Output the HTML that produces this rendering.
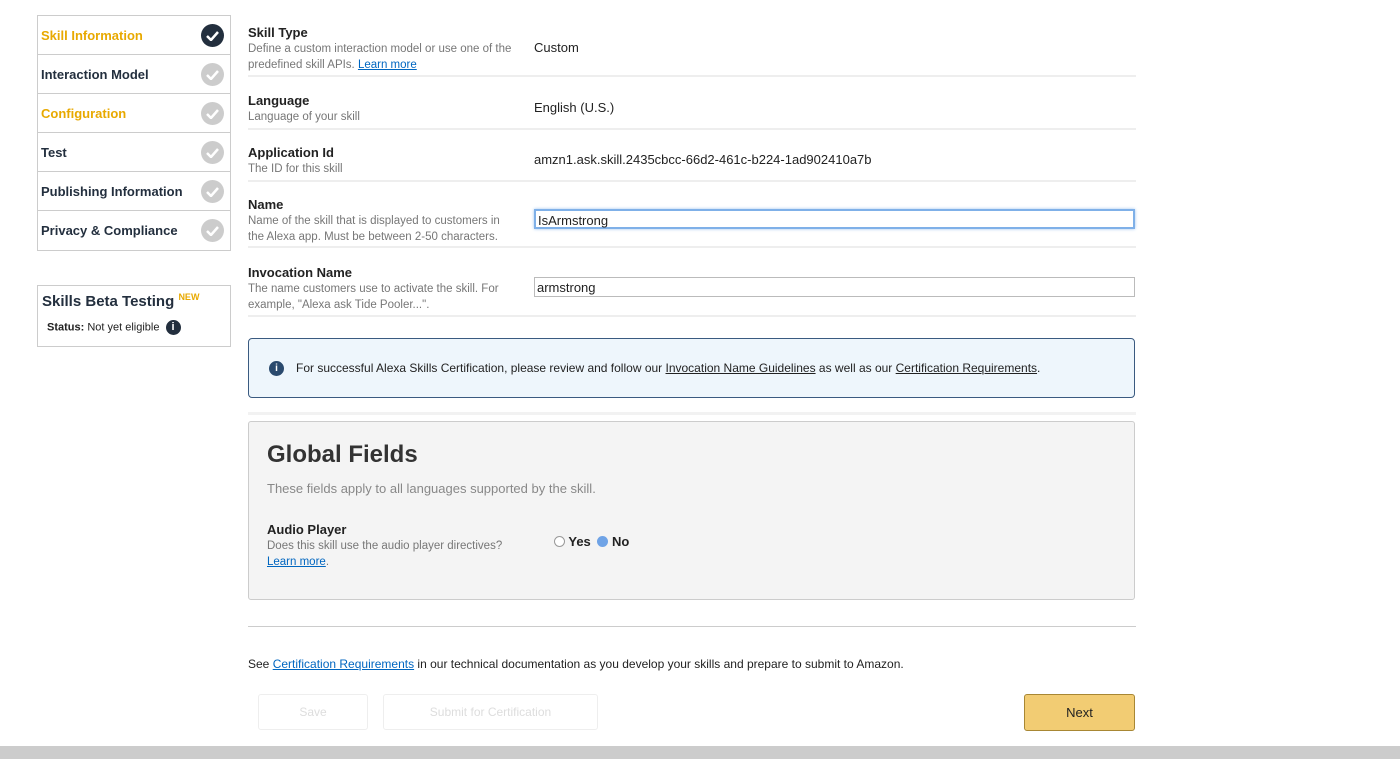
<!DOCTYPE html>
<html><head><style>
*{margin:0;padding:0;box-sizing:border-box}
body{width:1400px;height:759px;background:#fff;font-family:"Liberation Sans",Arial,sans-serif;position:relative;overflow:hidden;color:#222}
.a{position:absolute}
.nav{left:37px;top:15px;width:194px;border:1px solid #ccc}
.nav div{height:39px;border-bottom:1px solid #ccc;position:relative;font-weight:bold;font-size:13px;padding:12px 0 0 3px;color:#232f3e}
.nav div:last-child{border-bottom:none}
.nav .y{color:#e8a900}
.ck{position:absolute;right:6px;top:8px;width:23px;height:23px;border-radius:50%;background:#ccc}
.ck.d{background:#232f3e}
.ck svg{position:absolute;left:5px;top:6px}
.lbl{left:248px;font-size:13px;font-weight:bold;color:#222}
.sub{font-weight:normal;font-size:11.5px;color:#777;line-height:16px;margin-top:1px}
.val{left:534px;font-size:13px;color:#222}
.sep{left:248px;width:888px;height:2px;background:#eee}
.inp{left:534px;width:601px;height:20px;border:1px solid #bbb;font-size:13px;padding:2px 2px}
a,u{color:#0066c0;text-decoration:underline}
</style></head><body>
<div class="a nav">
<div class="y">Skill Information<span class="ck d"><svg width="13" height="11"><path d="M1 6l4 4 7-8" stroke="#fff" stroke-width="2.5" fill="none"/></svg></span></div>
<div>Interaction Model<span class="ck"><svg width="13" height="11"><path d="M1 6l4 4 7-8" stroke="#fff" stroke-width="2.5" fill="none"/></svg></span></div>
<div class="y">Configuration<span class="ck"><svg width="13" height="11"><path d="M1 6l4 4 7-8" stroke="#fff" stroke-width="2.5" fill="none"/></svg></span></div>
<div>Test<span class="ck"><svg width="13" height="11"><path d="M1 6l4 4 7-8" stroke="#fff" stroke-width="2.5" fill="none"/></svg></span></div>
<div>Publishing Information<span class="ck"><svg width="13" height="11"><path d="M1 6l4 4 7-8" stroke="#fff" stroke-width="2.5" fill="none"/></svg></span></div>
<div>Privacy &amp; Compliance<span class="ck"><svg width="13" height="11"><path d="M1 6l4 4 7-8" stroke="#fff" stroke-width="2.5" fill="none"/></svg></span></div>
</div>
<div class="a" style="left:37px;top:285px;width:194px;height:62px;border:1px solid #ccc">
<div style="position:absolute;left:4px;top:6px;font-size:15px;font-weight:bold;color:#232f3e">Skills Beta Testing <sup style="font-size:9px;color:#e8a900">NEW</sup></div>
<div style="position:absolute;left:9px;top:34px;font-size:11px"><b>Status:</b> Not yet eligible <span style="display:inline-block;width:15px;height:15px;border-radius:50%;background:#232f3e;color:#fff;font-size:11px;text-align:center;font-weight:bold;line-height:15px;vertical-align:middle;margin-left:3px">i</span></div>
</div>

<div class="a lbl" style="top:25px">Skill Type<div class="sub">Define a custom interaction model or use one of the<br>predefined skill APIs. <a>Learn more</a></div></div>
<div class="a val" style="top:40px">Custom</div>
<div class="a sep" style="top:75px"></div>
<div class="a lbl" style="top:93px">Language<div class="sub">Language of your skill</div></div>
<div class="a val" style="top:100px">English (U.S.)</div>
<div class="a sep" style="top:128px"></div>
<div class="a lbl" style="top:145px">Application Id<div class="sub">The ID for this skill</div></div>
<div class="a val" style="top:152px">amzn1.ask.skill.2435cbcc-66d2-461c-b224-1ad902410a7b</div>
<div class="a sep" style="top:180px"></div>
<div class="a lbl" style="top:197px">Name<div class="sub">Name of the skill that is displayed to customers in<br>the Alexa app. Must be between 2-50 characters.</div></div>
<div class="a inp" style="top:209px;border:2px solid #7fb0e8;box-shadow:0 0 3px #9cc3f0">IsArmstrong</div>
<div class="a sep" style="top:246px"></div>
<div class="a lbl" style="top:265px">Invocation Name<div class="sub">The name customers use to activate the skill. For<br>example, "Alexa ask Tide Pooler...".</div></div>
<div class="a inp" style="top:277px">armstrong</div>
<div class="a sep" style="top:315px"></div>

<div class="a" style="left:248px;top:338px;width:887px;height:60px;border:1px solid #3a5a80;border-radius:4px;background:#eef6fc;font-size:12px;padding:22px 0 0 47px">
<span style="position:absolute;left:20px;top:22px;width:15px;height:15px;border-radius:50%;background:#2a4a6e;color:#fff;font-size:10px;text-align:center;line-height:15px;font-weight:bold">i</span>
For successful Alexa Skills Certification, please review and follow our <u style="color:#222">Invocation Name Guidelines</u> as well as our <u style="color:#222">Certification Requirements</u>.</div>
<div class="a sep" style="top:412px;height:3px;background:#f2f2f2"></div>

<div class="a" style="left:248px;top:421px;width:887px;height:179px;border:1px solid #ccc;border-radius:3px;background:#f4f4f4">
<div style="position:absolute;left:18px;top:19px;font-size:24px;font-weight:bold;color:#333">Global Fields</div>
<div style="position:absolute;left:18px;top:59px;font-size:13px;color:#888">These fields apply to all languages supported by the skill.</div>
<div style="position:absolute;left:18px;top:100px;font-size:13px;font-weight:bold">Audio Player<div class="sub" style="font-size:11.5px">Does this skill use the audio player directives?<br><a>Learn more</a>.</div></div>
<div style="position:absolute;left:305px;top:112px;font-size:13px;font-weight:bold"><span style="display:inline-block;width:11px;height:11px;border:1px solid #999;border-radius:50%;background:#fff;vertical-align:-1px"></span> Yes <span style="display:inline-block;width:11px;height:11px;border-radius:50%;background:#6fa3e6;vertical-align:-1px;margin-left:3px"></span> No</div>
</div>

<div class="a sep" style="top:626px;height:1px;background:#ccc"></div>
<div class="a" style="left:248px;top:657px;font-size:12px">See <a>Certification Requirements</a> in our technical documentation as you develop your skills and prepare to submit to Amazon.</div>
<div class="a" style="left:258px;top:694px;width:110px;height:36px;border:1px solid #eee;border-radius:3px;color:#ddd;font-size:12px;text-align:center;line-height:34px">Save</div>
<div class="a" style="left:383px;top:694px;width:215px;height:36px;border:1px solid #eee;border-radius:3px;color:#ddd;font-size:12px;text-align:center;line-height:34px">Submit for Certification</div>
<div class="a" style="left:1024px;top:694px;width:111px;height:37px;border:1px solid #a88734;border-radius:3px;background:#f2cc73;color:#222;font-size:13px;text-align:center;line-height:35px">Next</div>
<div class="a" style="left:0;top:746px;width:1400px;height:13px;background:#ccc"></div>
</body></html>
